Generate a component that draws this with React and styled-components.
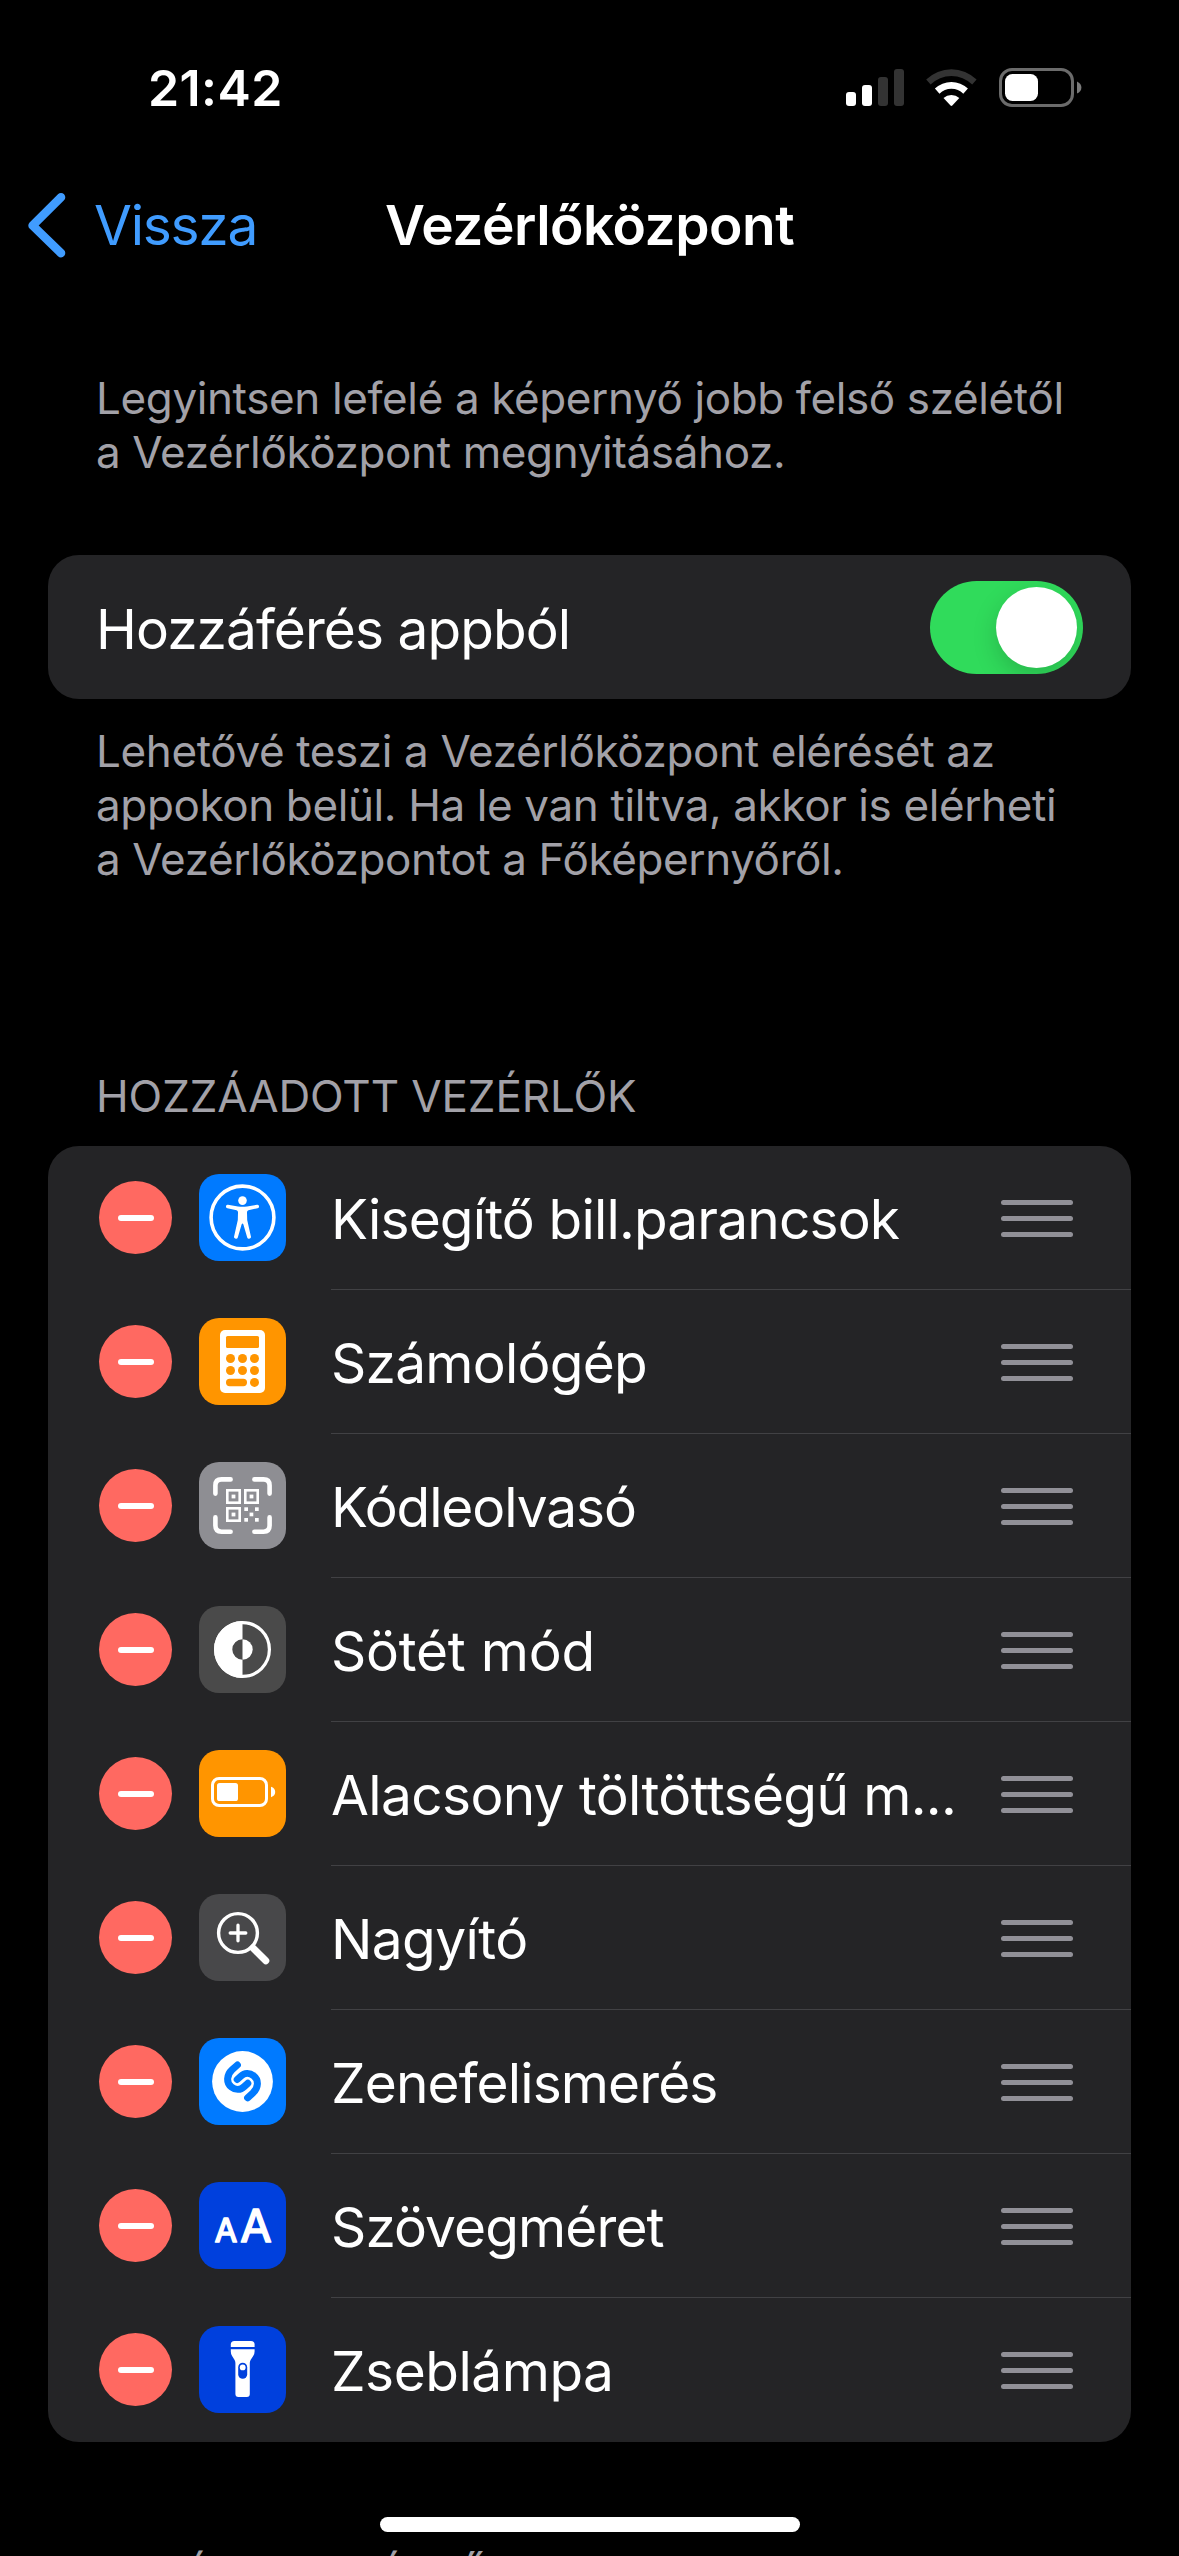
import React from "react";
import styled, { createGlobalStyle } from "styled-components";

const GlobalStyle = createGlobalStyle`
  *, *::before, *::after { box-sizing: border-box; }
  html, body { margin: 0; padding: 0; background: #000; }
  svg { display: block; flex: none; }
`;

const Screen = styled.div`
  position: relative;
  width: 1179px;
  height: 2556px;
  overflow: hidden;
  display: flex;
  flex-direction: column;
  background: #000;
  color: #fff;
  font-family: Inter, Roboto, "Liberation Sans", sans-serif;
`;

const StatusBar = styled.header`
  display: flex;
  flex: none;
  justify-content: space-between;
  align-items: center;
  height: 176px;
  padding: 0 97px 0 148px;
`;

const Time = styled.span`
  font-size: 50px;
  line-height: 60px;
  font-weight: 600;
  letter-spacing: 0.4px;
`;

const StatusIcons = styled.div`
  display: flex;
  align-items: center;
`;

const NavBar = styled.nav`
  display: grid;
  flex: none;
  grid-template-columns: 1fr auto 1fr;
  align-items: center;
  height: 98px;
  padding: 0 27px;
`;

const BackButton = styled.button`
  display: flex;
  align-items: center;
  gap: 27px;
  padding: 0;
  border: 0;
  background: none;
  color: #409cff;
  font: inherit;
  font-size: 55px;
  line-height: 66px;
  letter-spacing: -1.24px;
`;

const Title = styled.h1`
  margin: 0;
  font-size: 55px;
  line-height: 66px;
  font-weight: 600;
  letter-spacing: -0.5px;
`;

const Content = styled.main`
  display: flex;
  flex: none;
  flex-direction: column;
  padding: 97px 48px 0;
`;

const Note = styled.p`
  margin: 0;
  padding: ${(p) => p.$top || 0}px 0 0 48px;
  color: #a2a1a8;
  font-size: 44px;
  line-height: 54px;
  letter-spacing: -0.38px;
  white-space: nowrap;
`;

const SectionTitle = styled.h2`
  margin: 0;
  padding: ${(p) => p.$top}px 0 23px 48px;
  color: #a2a1a8;
  font-size: 44px;
  line-height: 54px;
  font-weight: 400;
  letter-spacing: -0.1px;
  white-space: nowrap;
`;

const Card = styled.section`
  margin-top: ${(p) => p.$top || 0}px;
  border-radius: 31px;
  background: #242426;
  overflow: hidden;
`;

const SwitchRow = styled.label`
  display: flex;
  justify-content: space-between;
  align-items: center;
  height: 144px;
  padding: 0 48px;
`;

const RowText = styled.span`
  padding-top: 3px;
  font-size: 55px;
  line-height: 66px;
  letter-spacing: ${(p) => p.$tracking}px;
  white-space: nowrap;
`;

const Switch = styled.span`
  display: flex;
  justify-content: flex-end;
  width: 153px;
  height: 93px;
  padding: 6px;
  border-radius: 47px;
  background: #30db5b;
  overflow: hidden;
`;

const Knob = styled.span`
  width: 81px;
  height: 81px;
  border-radius: 50%;
  background: #fff;
  box-shadow: 0 9px 24px rgba(0, 0, 0, 0.17);
`;

const ControlList = styled.ul`
  margin: 0;
  padding: 0;
  list-style: none;
`;

const ControlRow = styled.li`
  display: flex;
  align-items: center;
  height: 144px;
  padding-left: 51px;
`;

const RemoveButton = styled.button`
  display: flex;
  align-items: center;
  justify-content: center;
  width: 73px;
  height: 73px;
  margin: 0 27px 1px 0;
  padding: 0;
  border: 0;
  border-radius: 50%;
  background: #ff6961;
  flex: none;
`;

const Minus = styled.span`
  width: 36px;
  height: 6px;
  border-radius: 3px;
  background: #fff;
`;

const Tile = styled.span`
  width: 87px;
  height: 87px;
  margin: 0 45px 1px 0;
  border-radius: 20px;
  background: ${(p) => p.$color};
  flex: none;
`;

const RowBody = styled.div`
  display: flex;
  flex: 1;
  align-items: center;
  justify-content: space-between;
  height: 144px;
  padding-right: 58px;
  border-bottom: 1px solid #414144;

  ${ControlRow}:last-child & {
    border-bottom-color: transparent;
  }
`;

const Grip = styled.span`
  display: flex;
  flex-direction: column;
  gap: 11px;
  padding-top: 2px;
`;

const GripLine = styled.span`
  width: 72px;
  height: 5px;
  border-radius: 2.5px;
  background: #919097;
`;

const HomeIndicator = styled.div`
  position: absolute;
  left: 380px;
  bottom: 24px;
  width: 420px;
  height: 15px;
  border-radius: 8px;
  background: #fff;
`;

const StatusGlyphs = () => (
  <svg width="236" height="40" viewBox="846 68 236 40">
    <rect x="846" y="92" width="10" height="14" rx="3" fill="#fff" />
    <rect x="862" y="85" width="10" height="21" rx="3" fill="#fff" />
    <rect x="878" y="77" width="10" height="29" rx="3" fill="#333" />
    <rect x="894" y="69" width="10" height="37" rx="3" fill="#333" />
    <path d="M926.2 79.6a36 36 0 0 1 50.4 0l-4.4 4.9a29.6 29.6 0 0 0-41.6 0z" fill="#333" />
    <path d="M934.9 88.6a24 24 0 0 1 33 0l-4.6 5.1a17 17 0 0 0-23.8 0z" fill="#fff" />
    <path d="M943.5 98a12 12 0 0 1 15.8 0l-7 7.6q-.9.8-1.8 0z" fill="#fff" />
    <rect x="1000.5" y="69.5" width="72" height="36" rx="11.5" fill="none" stroke="#6b6b6b" strokeWidth="3" />
    <rect x="1005" y="74" width="33" height="27" rx="7.5" fill="#fff" />
    <path d="M1077 81.5q4.4 2 4.4 6t-4.4 6z" fill="#7b7b7b" />
  </svg>
);

const Chevron = () => (
  <svg width="40" height="66" viewBox="0 0 40 66" fill="none" stroke="currentColor" strokeWidth="8.6" strokeLinecap="round" strokeLinejoin="round">
    <path d="M34 5.3 5.6 33.5 34 61.1" />
  </svg>
);

const Glyph = ({ children }) => (
  <svg width="87" height="87" viewBox="0 0 87 87">
    {children}
  </svg>
);

const AccessibilityGlyph = () => (
  <Glyph>
    <circle cx="43.5" cy="43.5" r="31.4" fill="none" stroke="#fff" strokeWidth="3.6" />
    <circle cx="43.5" cy="26.6" r="4.3" fill="#fff" />
    <path
      d="M29 30.8 39 32.4Q43.5 33 48 32.4L58 30.8A1.7 1.7 0 0 1 58.6 34.2L49.4 36.2Q48 36.6 48 38.2L48.2 46 51.8 62A1.9 1.9 0 0 1 48.2 63.4L44.4 50.6Q43.5 48.6 42.6 50.6L38.8 63.4A1.9 1.9 0 0 1 35.2 62L38.8 46 39 38.2Q39 36.6 37.6 36.2L28.4 34.2A1.7 1.7 0 0 1 29 30.8Z"
      fill="#fff"
    />
  </Glyph>
);

const CalculatorGlyph = () => (
  <Glyph>
    <rect x="21" y="12" width="45" height="63" rx="5" fill="#fff" />
    <g fill="#ff9500">
      <rect x="27" y="18" width="33" height="12" rx="1.6" />
      {[40.5, 52.5].map((y) =>
        [31.5, 43.5, 55.5].map((x) => <circle key={`${x}-${y}`} cx={x} cy={y} r="4.5" />)
      )}
      <circle cx="55.5" cy="64.4" r="4.5" />
      <rect x="27" y="60.8" width="21" height="7.4" rx="3.7" />
    </g>
  </Glyph>
);

const CodeGlyph = () => (
  <Glyph>
    <g fill="none" stroke="#fff" strokeWidth="4.6" strokeLinecap="round">
      <path d="M16.4 31.6V23.5Q16.4 17.4 22.5 17.4H31.6" />
      <path d="M55.4 17.4H64.5Q70.6 17.4 70.6 23.5V31.6" />
      <path d="M16.4 55.4V63.6Q16.4 69.7 22.5 69.7H31.6" />
      <path d="M55.4 69.7H64.5Q70.6 69.7 70.6 63.6V55.4" />
    </g>
    {[[27, 27], [45, 27], [27, 45]].map(([x, y]) => (
      <g key={`${x}-${y}`}>
        <rect x={x + 1.3} y={y + 1.3} width="12.4" height="12.4" fill="none" stroke="#fff" strokeWidth="2.6" />
        <rect x={x + 5.6} y={y + 5.6} width="3.8" height="3.8" fill="#fff" />
      </g>
    ))}
    {[[45.3, 45.3], [56, 45.3], [50.6, 50.6], [45.3, 56], [56, 56]].map(([x, y]) => (
      <rect key={`${x}-${y}`} x={x} y={y} width="3.7" height="3.7" fill="#fff" />
    ))}
  </Glyph>
);

const DarkModeGlyph = () => (
  <Glyph>
    <circle cx="43.5" cy="43.5" r="26.9" fill="none" stroke="#fff" strokeWidth="3.2" />
    <path d="M43.5 15a28.5 28.5 0 0 0 0 57V53.7a10.2 10.2 0 0 1 0-20.4z" fill="#fff" />
    <path d="M43.5 33.3a10.2 10.2 0 0 1 0 20.4z" fill="#fff" />
  </Glyph>
);

const BatteryGlyph = () => (
  <Glyph>
    <rect x="13.5" y="28.5" width="54" height="27" rx="6.6" fill="none" stroke="#fff" strokeWidth="3" />
    <rect x="18" y="33" width="21" height="18" rx="2.6" fill="#fff" />
    <path d="M72 36.8q4.2 1.4 4.2 5.2t-4.2 5.2z" fill="#fff" />
  </Glyph>
);

const MagnifierGlyph = () => (
  <Glyph>
    <g fill="none" stroke="#fff" strokeLinecap="round">
      <circle cx="39" cy="39" r="19.4" strokeWidth="3.4" />
      <path d="M39 31.2V46.8M31.2 39H46.8" strokeWidth="3.3" />
      <path d="M54 54 66.8 66.8" strokeWidth="7" />
    </g>
  </Glyph>
);

const MusicGlyph = () => (
  <Glyph>
    <circle cx="43.5" cy="43.5" r="30.4" fill="#fff" />
    <g fill="none" stroke="#007aff" strokeWidth="7" strokeLinecap="round">
      <path d="M38.4 27 33.2 31.6C27.2 37 27.2 45 32.4 49 36.6 52.4 41.6 52 45.2 48.6L48.8 45.3" />
      <path d="M38.4 27 33.2 31.6C27.2 37 27.2 45 32.4 49 36.6 52.4 41.6 52 45.2 48.6L48.8 45.3" transform="rotate(180 43.5 43.4)" />
    </g>
  </Glyph>
);

const GlyphLetter = styled.text`
  font-family: Inter, Roboto, "Liberation Sans", sans-serif;
  font-size: ${(p) => p.$size}px;
  font-weight: 400;
  fill: #fff;
  stroke: #fff;
  stroke-width: 1.7px;
  stroke-linejoin: round;
  text-anchor: middle;
`;

const TextSizeGlyph = () => (
  <Glyph>
    <GlyphLetter x="27" y="60.2" $size={32.5}>A</GlyphLetter>
    <GlyphLetter x="57" y="60.2" $size={45.5}>A</GlyphLetter>
  </Glyph>
);

const TorchGlyph = () => (
  <Glyph>
    <path d="M31.8 20.9V18.6Q31.8 15 35.4 15H52Q55.6 15 55.6 18.6V20.9Z" fill="#fff" />
    <path d="M31.8 23.2H55.6V25.5Q55.6 28 54.2 30L51.6 34Q50.8 35.3 50.8 37V68Q50.8 71 47.8 71H39.4Q36.4 71 36.4 68V37Q36.4 35.3 35.6 34L33.1 30Q31.8 28 31.8 25.5Z" fill="#fff" />
    <rect x="39.2" y="36.8" width="9" height="16" rx="4.5" fill="#0040dd" />
    <circle cx="43.7" cy="41.4" r="2.9" fill="#fff" />
  </Glyph>
);

const controls = [
  { name: "Kisegítő bill.parancsok", color: "#007aff", Icon: AccessibilityGlyph, tracking: -0.84 },
  { name: "Számológép", color: "#ff9500", Icon: CalculatorGlyph, tracking: -0.76 },
  { name: "Kódleolvasó", color: "#8e8e93", Icon: CodeGlyph, tracking: -1.1 },
  { name: "Sötét mód", color: "#4a4a4a", Icon: DarkModeGlyph, tracking: -0.25 },
  { name: "Alacsony töltöttségű m...", color: "#ff9500", Icon: BatteryGlyph, tracking: -0.64 },
  { name: "Nagyító", color: "#48484a", Icon: MagnifierGlyph, tracking: -0.6 },
  { name: "Zenefelismerés", color: "#007aff", Icon: MusicGlyph, tracking: -0.88 },
  { name: "Szövegméret", color: "#0040dd", Icon: TextSizeGlyph, tracking: -0.89 },
  { name: "Zseblámpa", color: "#0040dd", Icon: TorchGlyph, tracking: -0.48 },
];

export default function App() {
  return (
    <Screen>
      <GlobalStyle />
      <StatusBar>
        <Time>21:42</Time>
        <StatusIcons>
          <StatusGlyphs />
        </StatusIcons>
      </StatusBar>
      <NavBar>
        <BackButton>
          <Chevron />
          Vissza
        </BackButton>
        <Title>Vezérlőközpont</Title>
      </NavBar>
      <Content>
        <Note>
          Legyintsen lefelé a képernyő jobb felső szélétől
          <br />a Vezérlőközpont megnyitásához.
        </Note>
        <Card $top={76}>
          <SwitchRow>
            <RowText $tracking={-0.94}>Hozzáférés appból</RowText>
            <Switch>
              <Knob />
            </Switch>
          </SwitchRow>
        </Card>
        <Note $top={25}>
          Lehetővé teszi a Vezérlőközpont elérését az
          <br />
          appokon belül. Ha le van tiltva, akkor is elérheti
          <br />a Vezérlőközpontot a Főképernyőről.
        </Note>
        <SectionTitle $top={183}>HOZZÁADOTT VEZÉRLŐK</SectionTitle>
        <Card>
          <ControlList>
            {controls.map(({ name, color, Icon, tracking }) => (
              <ControlRow key={name}>
                <RemoveButton>
                  <Minus />
                </RemoveButton>
                <Tile $color={color}>
                  <Icon />
                </Tile>
                <RowBody>
                  <RowText $tracking={tracking}>{name}</RowText>
                  <Grip>
                    <GripLine />
                    <GripLine />
                    <GripLine />
                  </Grip>
                </RowBody>
              </ControlRow>
            ))}
          </ControlList>
        </Card>
        <SectionTitle $top={107}>TOVÁBBI VEZÉRLŐK</SectionTitle>
      </Content>
      <HomeIndicator />
    </Screen>
  );
}
